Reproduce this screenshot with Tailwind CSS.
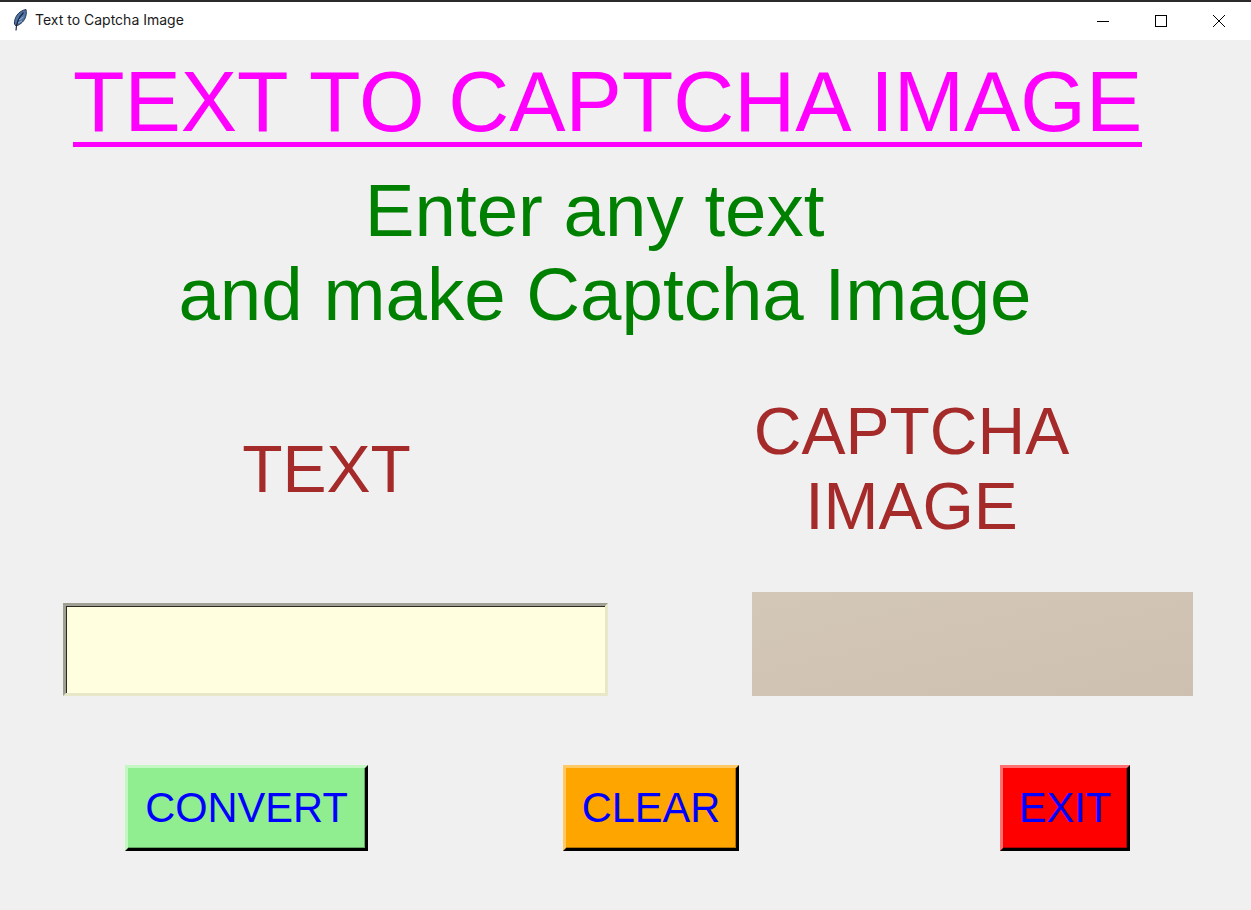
<!DOCTYPE html>
<html>
  <head>
    <title>Text to Captcha Image</title>
    <meta charset="UTF-8" />
    <script src="https://cdn.jsdelivr.net/npm/@tailwindcss/browser@4"></script>
  </head>
  <body class="bg-[#f0f0f0] h-[910px] w-[1251px] overflow-hidden font-['Liberation_Sans',Arial,sans-serif]">
    <!-- window title bar -->
    <div class="h-10 bg-white border-t-2 border-[#2b2b2b] flex items-center justify-between">
      <div class="flex items-center pl-[13px] gap-2 text-[14px] leading-[18px] pb-[2px] text-[#1a1a1a] font-['Inter',sans-serif]">
        <svg width="14" height="22" viewBox="0 0 14 22">
          <path d="M1.5 15 C1 9 5 2 13 0.5 C14 5 12.5 10 9.5 13 C7.5 15 5 16.5 3 17 Z" fill="#4f74a8" stroke="#26364f" stroke-width="1" />
          <path d="M3 21.5 C3.2 14 6 8 10.5 3.5" fill="none" stroke="#1c2536" stroke-width="1.2" />
          <path d="M6 11 L10.5 8 M5 14 L9 12" fill="none" stroke="#a9bdd8" stroke-width="0.8" />
        </svg>
        <span>Text to Captcha Image</span>
      </div>
      <div class="flex mr-[3px]">
        <div class="w-[58px] h-[38px] flex items-center justify-center">
          <svg width="12" height="12" viewBox="0 0 12 12"><path d="M0 6.5H12" stroke="#000" fill="none" /></svg>
        </div>
        <div class="w-[58px] h-[38px] flex items-center justify-center">
          <svg width="12" height="12" viewBox="0 0 12 12"><rect x="0.5" y="0.5" width="11" height="11" stroke="#000" fill="none" /></svg>
        </div>
        <div class="w-[58px] h-[38px] flex items-center justify-center">
          <svg width="12" height="12" viewBox="0 0 12 12"><path d="M0 0L12 12M12 0L0 12" stroke="#000" fill="none" /></svg>
        </div>
      </div>
    </div>

    <h1 class="ml-[73px] mt-4 w-fit text-[84.4px] leading-[92px] text-[#ff00ff] whitespace-nowrap border-b-[5px] border-[#ff00ff] h-[91px]">TEXT TO CAPTCHA IMAGE</h1>

    <p class="w-[1210px] mt-[22px] text-center text-[74.5px] leading-[84px] text-[#008000]">Enter any text&nbsp;<br />and make Captcha Image</p>

    <div class="flex mt-[57px] text-[#a52a2a] text-[66px] leading-[75px] text-center">
      <div class="w-[653px] flex items-center justify-center">TEXT</div>
      <div class="w-[517px]">CAPTCHA<br />IMAGE</div>
    </div>

    <div class="flex items-end mt-[48px] pl-[63px]">
      <input type="text" class="w-[545px] h-[93px] bg-[#ffffe0] border-[3px] border-t-[#9f9f94] border-l-[#9f9f94] border-r-[#e8e8c8] border-b-[#e8e8c8] shadow-[inset_1px_1px_0_#2a2a20] outline-none" />
      <div class="w-[441px] h-[104px] ml-[144px] bg-gradient-to-br from-[#d3c7b8] to-[#cdc0b1]"></div>
    </div>

    <div class="flex mt-[69px] h-[86px] text-[41.6px] text-[#0000ff]">
      <button class="ml-[125px] w-[243px] h-[86px] bg-[#90ee90] border-[3px] border-t-[#c5f7c5] border-l-[#c5f7c5] border-r-black border-b-black shadow-[inset_-1px_-1px_0_#64a664]">CONVERT</button>
      <button class="ml-[195px] w-[176px] h-[86px] bg-[#ffa500] border-[3px] border-t-[#ffc966] border-l-[#ffc966] border-r-black border-b-black shadow-[inset_-1px_-1px_0_#b27300]">CLEAR</button>
      <button class="ml-[261px] w-[130px] h-[86px] bg-[#ff0000] border-[3px] border-t-[#ff7070] border-l-[#ff7070] border-r-black border-b-black shadow-[inset_-1px_-1px_0_#b20000]">EXIT</button>
    </div>
  </body>
</html>
